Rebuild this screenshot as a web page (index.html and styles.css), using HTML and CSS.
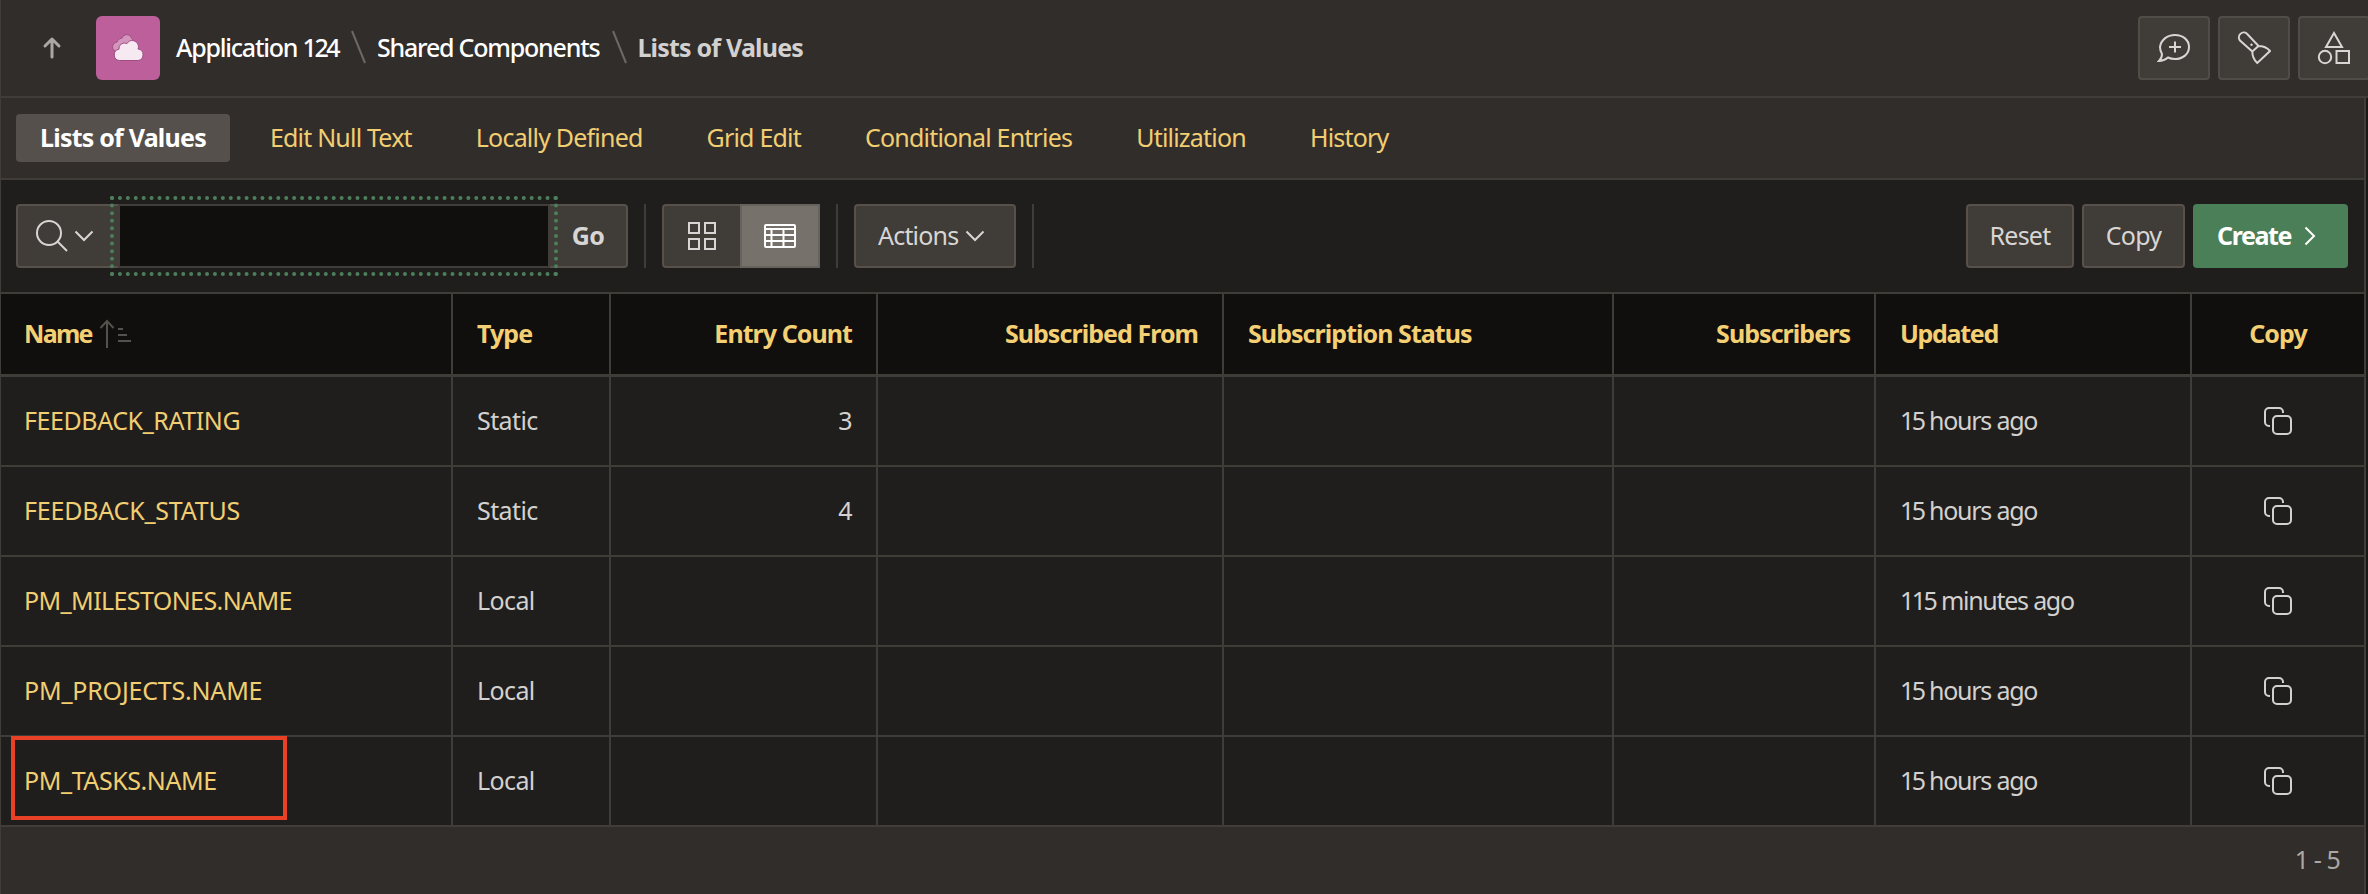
FILE: index.html
```html
<!DOCTYPE html>
<html lang="en">
<head>
<meta charset="utf-8">
<title>Lists of Values</title>
<link rel="stylesheet" href="styles.css">
</head>
<body>
<svg class="defs" width="0" height="0">
  <symbol id="copy" viewBox="0 0 28 28"><path d="M6 19H5a4 4 0 0 1-4-4V5a4 4 0 0 1 4-4h10a4 4 0 0 1 4 4v1" /><rect x="9" y="9" width="18" height="18" rx="4" /></symbol>
</svg>
<header class="header">
  <svg class="up" width="20" height="24" viewBox="0 0 20 24"><path d="M10 21V3M3 10l7-7 7 7"/></svg>
  <div class="app-icon"><svg width="32" height="26" viewBox="0 0 32 26">
    <path class="cloud-back" d="M3 16a4.500 4.500 0 0 1-2-6 4.500 4.500 0 0 1 4-3 5.500 5.500 0 0 1 5-4 5 5 0 0 1 9-1 4 4 0 0 1 1 5L8 17z"/>
    <path class="cloud-front" d="M7.500 25.500a5.700 5.700 0 0 1-.5-11.300A5.500 5.500 0 0 1 15 8.600a6.200 6.200 0 0 1 11.500 2.400c.1 1-.2 2-.5 3a5.800 5.800 0 0 1 0 11.500z"/>
  </svg></div>
  <nav class="crumbs"><span class="c1">Application <span class="num">124</span></span><svg width="16" height="34"><path d="M1 1l13 32"/></svg><span class="c2">Shared Components</span><svg width="16" height="34"><path d="M1 1l13 32"/></svg><b class="c3">Lists of Values</b></nav>
  <div class="header-tools">
    <button class="btn icon"><svg width="34" height="34" viewBox="0 0 34 34"><path d="M18 4c8 0 14 5 14 12s-6 12-14 12c-2.500 0-5-.5-7-1.500C8 29 5 30 2 30c2-2 3-4 3-7-1.200-2-2-4.500-2-7C4 9 10 4 18 4zM18 10.500v11M12 16h12"/></svg></button>
    <button class="btn icon"><svg width="34" height="34" viewBox="0 0 34 34"><path d="M3 9.500A4.900 4.900 0 0 1 10 2.700L21.500 15C26 15 30 16.500 33 20L20.300 32C17 29 15.300 25 15.300 20.500zM15.300 20.500L21.500 15"/><circle class="dot" cx="14.500" cy="13.700" r="1.200"/></svg></button>
    <button class="btn icon"><svg width="34" height="34" viewBox="0 0 34 34"><path d="M17 2l8 14H9z"/><circle cx="8" cy="26" r="6.200"/><rect x="19.500" y="20" width="12.500" height="12"/></svg></button>
  </div>
</header>
<main class="report">
  <nav class="tabs"><span class="tab active">Lists of Values</span><span class="tab">Edit Null Text</span><span class="tab">Locally Defined</span><span class="tab">Grid Edit</span><span class="tab">Conditional Entries</span><span class="tab">Utilization</span><span class="tab">History</span></nav>
  <div class="toolbar">
    <div class="search">
      <div class="search-menu"><svg width="34" height="34" viewBox="0 0 34 34"><circle cx="14" cy="14" r="12"/><path d="M22.500 22.500L32 32"/></svg><svg width="20" height="14" viewBox="0 0 20 14"><path d="M1.500 2.500l8.500 8.500 8.500-8.500"/></svg></div>
      <div class="field"></div>
      <div class="go">Go</div>
    </div>
    <i class="sep"></i>
    <div class="views">
      <div class="view"><svg width="30" height="30" viewBox="0 0 30 30"><path d="M2 2h10v10H2zM18 2h10v10H18zM2 18h10v10H2zM18 18h10v10H18z"/></svg></div>
      <div class="view on"><svg width="32" height="24" viewBox="0 0 32 24"><rect x="1" y="1" width="30" height="22" rx="1"/><path d="M1 5h30M1 11h30M1 17h30M7.500 5v18M19.500 5v18"/></svg></div>
    </div>
    <i class="sep"></i>
    <button class="btn actions">Actions<svg width="20" height="14" viewBox="0 0 20 14"><path d="M1.500 2.500l8.500 8.500 8.500-8.500"/></svg></button>
    <i class="sep"></i>
    <div class="right"><button class="btn reset">Reset</button><button class="btn copy">Copy</button><button class="btn create">Create<svg width="12" height="20" viewBox="0 0 12 20"><path d="M1.500 1.500L10 10l-8.500 8.500"/></svg></button></div>
  </div>
  <table class="grid">
    <colgroup><col class="w1"><col class="w2"><col class="w3"><col class="w4"><col class="w5"><col class="w6"><col class="w7"><col class="w8"></colgroup>
    <thead><tr><th>Name<svg class="sort" width="34" height="30" viewBox="0 0 34 30"><path d="M8 29V2M1.500 9L8 2l6.500 7M19 10h5M19 16h9M19 22h13"/></svg></th><th>Type</th><th class="r">Entry Count</th><th class="r">Subscribed From</th><th>Subscription Status</th><th class="r">Subscribers</th><th>Updated</th><th class="c">Copy</th></tr></thead>
    <tbody>
      <tr><td class="name">FEEDBACK_RATING</td><td>Static</td><td class="r">3</td><td></td><td></td><td></td><td class="age"><span class="num">15</span> hours ago</td><td class="c"><svg width="28" height="28"><use href="#copy"/></svg></td></tr>
      <tr><td class="name loose">FEEDBACK_STATUS</td><td>Static</td><td class="r">4</td><td></td><td></td><td></td><td class="age"><span class="num">15</span> hours ago</td><td class="c"><svg width="28" height="28"><use href="#copy"/></svg></td></tr>
      <tr><td class="name tight">PM_MILESTONES.NAME</td><td>Local</td><td></td><td></td><td></td><td></td><td class="age"><span class="num">115</span> minutes ago</td><td class="c"><svg width="28" height="28"><use href="#copy"/></svg></td></tr>
      <tr><td class="name loose">PM_PROJECTS.NAME</td><td>Local</td><td></td><td></td><td></td><td></td><td class="age"><span class="num">15</span> hours ago</td><td class="c"><svg width="28" height="28"><use href="#copy"/></svg></td></tr>
      <tr><td class="name marked">PM_TASKS.NAME</td><td>Local</td><td></td><td></td><td></td><td></td><td class="age"><span class="num">15</span> hours ago</td><td class="c"><svg width="28" height="28"><use href="#copy"/></svg></td></tr>
    </tbody>
  </table>
  <footer class="footer">1 - 5</footer>
</main>
</body>
</html>
```
FILE: styles.css
```css
*, *::after { box-sizing: border-box; }
body { margin: 0; width: 2368px; height: 894px; overflow: hidden; background: #1a1816; color: #d3d1cf; font: 25px/32px "Noto Sans", "Open Sans", sans-serif; letter-spacing: -0.6px; }
svg { display: block; flex: none; fill: none; stroke: currentColor; stroke-width: 2; }
.defs { position: absolute; }
.num { letter-spacing: -2.500px; }
.header { height: 98px; display: flex; align-items: center; background: #312d2a; border-bottom: 2px solid #403c38; border-left: 1px solid #403c38; overflow: hidden; }
.up { margin-left: 41px; color: #aaa7a4; stroke-width: 3; stroke-linecap: round; stroke-linejoin: round; }
.app-icon { width: 64px; height: 64px; margin-left: 34px; border-radius: 6px; background: #bc5f9a; display: flex; align-items: center; justify-content: center; flex: none; }
.app-icon svg { stroke: #a04f84; stroke-width: 1; overflow: visible; }
.cloud-back { fill: #d395bc; }
.cloud-front { fill: #f6e9f1; }
.crumbs { display: flex; align-items: center; margin-left: 16px; padding-bottom: 2px; color: #fff; white-space: nowrap; font-weight: 500; letter-spacing: -1.220px; }
.crumbs svg { margin: 0 10px 0 13px; color: #6c6864; }
.c3 { color: #d3d1cf; letter-spacing: -0.800px; margin-left: -1px; }
.header-tools { display: flex; gap: 8px; margin-left: auto; margin-right: -2px; }
.btn { height: 64px; padding: 0 0 2px; margin: 0; border: 2px solid #57504b; border-radius: 4px; background: #403c37; color: #d8d6d4; font: inherit; letter-spacing: -0.800px; display: flex; align-items: center; justify-content: center; flex: none; }
.btn.icon { width: 72px; padding: 0; border-color: #504c48; }
.dot { fill: currentColor; stroke: none; }
.report { width: 2366px; border-left: 1px solid #403c38; border-right: 2px solid #403c38; }
.tabs { height: 82px; display: flex; align-items: center; gap: 16px; padding-left: 15px; background: #312d2a; border-bottom: 2px solid #403c38; color: #f1ce72; letter-spacing: -0.800px; }
.tab { height: 48px; padding: 0 24px; line-height: 47px; border-radius: 4px; white-space: nowrap; }
.tab.active { background: #55504b; color: #fff; font-weight: 700; letter-spacing: -0.780px; }
.toolbar { height: 114px; display: flex; align-items: center; padding: 0 16px 0 15px; background: #201e1c; border-bottom: 2px solid #403c38; }
.search { width: 612px; height: 64px; display: flex; background: #403c37; border: 2px solid #57504b; border-radius: 4px; flex: none; }
.search-menu { width: 102px; display: flex; align-items: center; gap: 5px; padding-left: 17px; color: #d8d6d4; flex: none; }
.field { width: 428px; height: 60px; background: #100f0d; box-shadow: 0 0 0 2px #403c38; outline: 4px dotted #4b805b; outline-offset: 6px; flex: none; }
.go { flex: 1; text-align: center; line-height: 59px; padding-left: 2px; font-weight: 700; color: #d8d6d4; }
.sep { width: 2px; height: 64px; margin: 0 16px; background: #403c38; flex: none; }
.views { width: 158px; height: 64px; display: flex; border: 2px solid #57504b; border-radius: 4px; background: #403c37; color: #d8d6d4; flex: none; }
.view { flex: 1; display: flex; align-items: center; justify-content: center; }
.view.on { background: #77716c; color: #fff; border-left: 2px solid #67625d; box-shadow: 0 0 0 2px #67625d; clip-path: inset(-2px -2px -2px 0); }
.actions { width: 162px; padding-left: 22px; gap: 7px; justify-content: flex-start; }
.right { display: flex; gap: 8px; margin-left: auto; }
.reset { width: 108px; }
.copy { width: 103px; }
.create { width: 155px; padding-left: 22px; justify-content: flex-start; background: #4b7f58; border-color: #4b7f58; color: #fff; font-weight: 700; gap: 13px; letter-spacing: -1.400px; }
.btn svg { position: relative; top: 1px; }
.btn.icon svg { top: 0; }
.grid { width: 2363px; table-layout: fixed; border-collapse: separate; border-spacing: 0; background: #201e1c; }
.w1 { width: 452px; } .w2 { width: 158px; } .w3 { width: 267px; } .w4 { width: 346px; } .w5 { width: 390px; } .w6 { width: 262px; } .w7 { width: 316px; } .w8 { width: 172px; }
th, td { height: 90px; padding: 0 24px 2px; text-align: left; border-right: 2px solid #403c38; border-bottom: 2px solid #403c38; white-space: nowrap; vertical-align: middle; position: relative; }
th { height: 83px; border-bottom-width: 3px; background: #100f0d; color: #f4cf73; font-weight: 700; letter-spacing: -0.950px; }
th:nth-child(7) { letter-spacing: -1.300px; }
th:last-child, td:last-child { border-right: 0; }
th:first-child, td:first-child { padding-left: 23px; }
th:first-child { letter-spacing: -1.700px; }
.r { text-align: right; }
.c { text-align: center; }
td.c { padding-bottom: 0; }
.c svg { margin: 0 auto; }
.age { letter-spacing: -1.300px; word-spacing: 0.300px; }
.name { color: #f1ce72; letter-spacing: -0.420px; }
.name.loose { letter-spacing: -0.200px; }
.name.tight { letter-spacing: -0.600px; }
.sort { display: inline-block; vertical-align: -6px; margin-left: 7px; color: #55514d; }
.marked::after { content: ""; position: absolute; left: 10px; top: -1px; width: 276px; height: 84px; border: 4px solid #e84126; }
.footer { height: 67px; background: #312d2a; text-align: right; line-height: 64px; padding-right: 24px; color: #aaa7a4; letter-spacing: -0.900px; }
```
